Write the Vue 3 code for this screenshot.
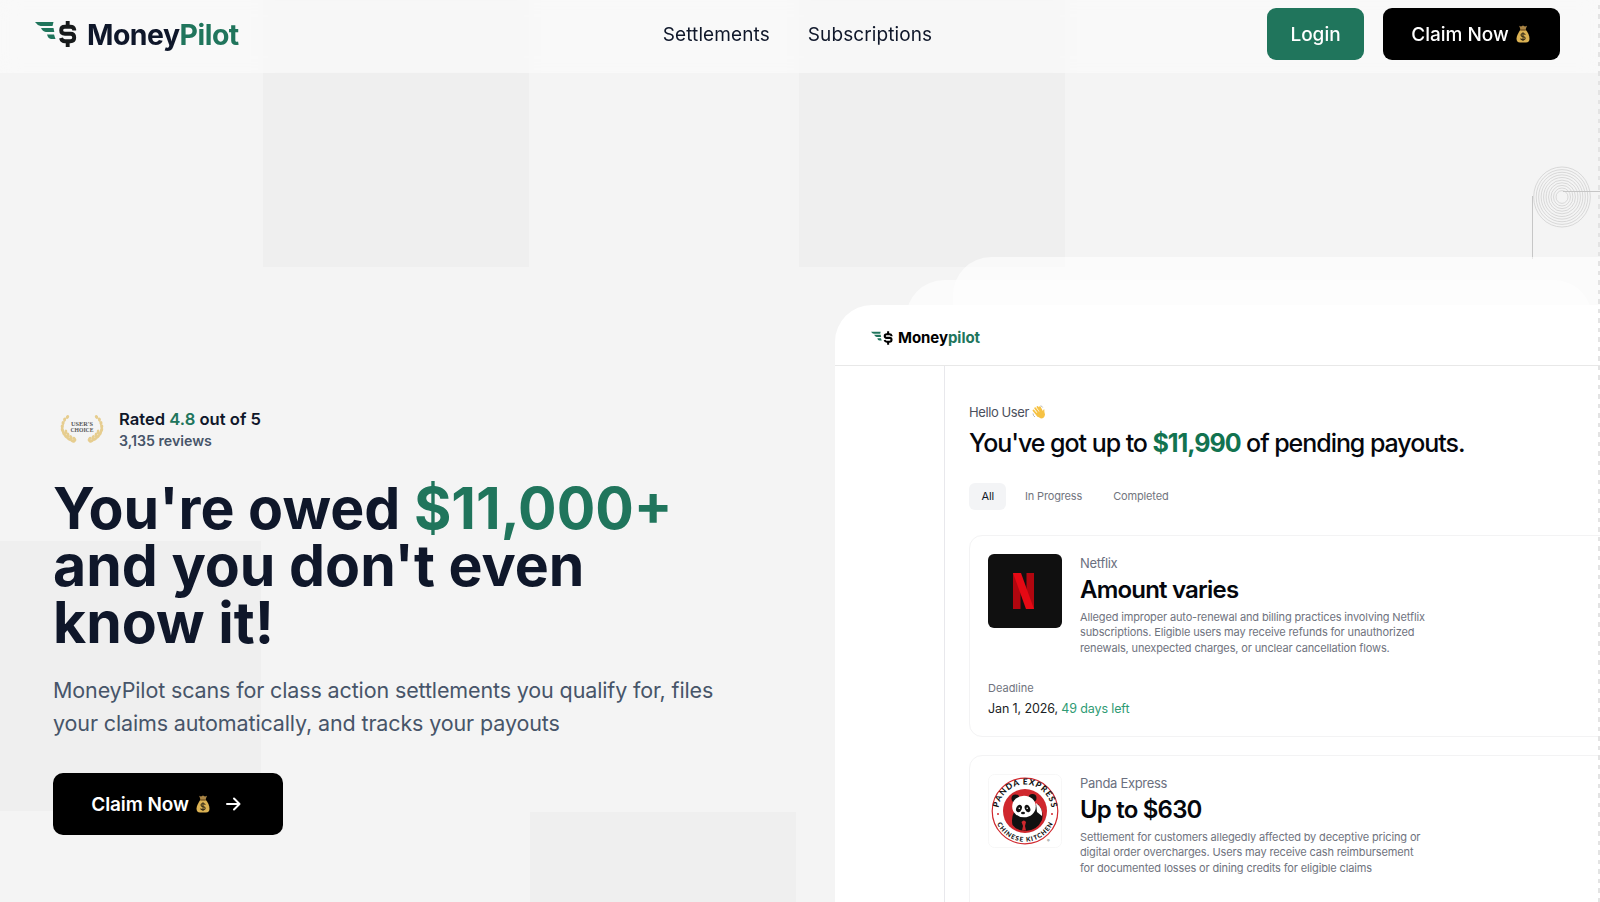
<script setup>
const links = ['Settlements', 'Subscriptions'];
const tabs = ['All', 'In Progress', 'Completed'];

const claims = [
  {
    id: 'netflix',
    name: 'Netflix',
    amount: 'Amount varies',
    lines: [
      'Alleged improper auto-renewal and billing practices involving Netflix',
      'subscriptions. Eligible users may receive refunds for unauthorized',
      'renewals, unexpected charges, or unclear cancellation flows.'
    ],
    deadline: 'Jan 1, 2026,',
    left: '49 days left'
  },
  {
    id: 'panda',
    name: 'Panda Express',
    amount: 'Up to $630',
    lines: [
      'Settlement for customers allegedly affected by deceptive pricing or',
      'digital order overcharges. Users may receive cash reimbursement',
      'for documented losses or dining credits for eligible claims'
    ]
  }
];

const rings = Array.from({ length: 10 }, (_, i) => 6 + i * 2.48);

// leaves of the left laurel branch, mirrored for the right one
const leaves = [
  [7.5, 2, 30], [4.6, 4.5, 15], [3, 8, 0], [2.2, 11.5, -5], [2.4, 15, -20],
  [3.8, 18.5, -30], [6, 21.5, -45], [9, 24, -60], [12.8, 26, -75],
  [5.8, 17, 5], [8, 20, -10], [11, 22.5, -25], [14.5, 24, -35]
];
</script>

<template>
  <div class="page">
    <svg class="defs" width="0" height="0">
      <symbol id="mark" viewBox="0 0 42 26">
        <g fill="#20755c">
          <path d="M0 1h18.5l-1 4H5.5Q2.5 4.500 0 1z" />
          <path d="M6 7h12.500l.8 4h-8.500Q7.500 10.500 6 7z" />
          <path d="M12 13.500h7l1.500 4.500h-4.500Q13 17.500 12 13.500z" />
        </g>
        <path d="M39.200 9.500V8.500Q38.500 5.800 35.500 5.800H30Q26.200 5.800 26.200 9.200T30 12.800H35.500Q39.200 12.800 39.200 16.500T35.500 20.200H30Q26.800 20.200 26 17M32.700 0V5.500M32.700 20.500V26" fill="none" stroke="currentColor" stroke-width="3.900" />
      </symbol>
      <symbol id="bag" viewBox="0 0 14 18">
        <path d="M3.200.8 5 1.500 7 .5l2 1L11 .8 9.500 4.800h-5z" fill="#a98445" />
        <path d="M4.500 4.500h5C12 7.500 13.500 10.500 13.500 13.800Q13.500 17.500 10 17.500H4Q.5 17.500.5 13.800.5 10.500 4.500 4.500z" fill="#dbb253" />
        <path d="M4.200 5h5.600" stroke="#6e4c1e" stroke-width="1.200" />
        <path d="M9.300 9.700Q8.800 8.500 7 8.500 5 8.500 5 10T7 11.600Q9.200 11.800 9.200 13.300T7 14.900Q5 14.900 4.600 13.500M7 7.300V16" fill="none" stroke="#3a3019" stroke-width="1.100" />
      </symbol>
    </svg>

    <div class="square sq-a"></div>
    <div class="square sq-b"></div>
    <div class="square sq-c"></div>
    <div class="square sq-d"></div>

    <svg class="spiral" width="70" height="96" viewBox="0 0 70 96">
      <g fill="none" stroke="#cbcbcb" stroke-width=".7">
        <ellipse v-for="r in rings" :key="r" cx="32" cy="33" :rx="r" :ry="r * 1.060" />
      </g>
      <path d="M2.500 32V95M33 27.500h37" fill="none" stroke="#c6c6c6" />
    </svg>

    <header class="navbar">
      <div class="brand">
        <svg class="mark" width="42" height="26"><use href="#mark" /></svg>
        <span class="brand-name">Money<b>Pilot</b></span>
      </div>
      <nav class="nav-links">
        <a v-for="link in links" :key="link" href="#">{{ link }}</a>
      </nav>
      <div class="actions">
        <button class="login">Login</button>
        <button class="claim"><span>Claim Now</span><svg width="14" height="18"><use href="#bag" /></svg></button>
      </div>
    </header>

    <main class="hero">
      <section class="intro">
        <div class="rating">
          <svg class="laurel" width="44" height="30" viewBox="0 0 44 30">
            <g v-for="side in [1, -1]" :key="side" :transform="side === 1 ? '' : 'translate(44 0) scale(-1 1)'">
              <path d="M7 1Q-1 14 6 22 10 26 16 26" fill="none" stroke="#e3c67e" stroke-width=".8" />
              <ellipse
                v-for="(leaf, i) in leaves" :key="i"
                :cx="leaf[0]" :cy="leaf[1]" rx="1.500" :ry="i < 4 ? 1.900 : 2.500"
                :transform="`rotate(${leaf[2]} ${leaf[0]} ${leaf[1]})`" fill="#e6cd8f"
              />
            </g>
            <text x="22" y="11" textLength="22" lengthAdjust="spacingAndGlyphs">USER'S</text>
            <text x="22" y="16.800" textLength="23" lengthAdjust="spacingAndGlyphs">CHOICE</text>
          </svg>
          <div>
            <p class="rated">Rated <em>4.8</em> out of 5</p>
            <p class="reviews">3,135 reviews</p>
          </div>
        </div>
        <h1>You're owed <em>$11,000+</em><br>and you don't even<br>know it!</h1>
        <p class="lead">MoneyPilot scans for class action settlements you qualify for, files<br>your claims automatically, and tracks your payouts</p>
        <button class="cta">
          <span>Claim Now</span>
          <svg width="14" height="18"><use href="#bag" /></svg>
          <svg class="arrow" width="15" height="14" viewBox="0 0 15 14">
            <path d="M1 7h12.500M8 1.500 13.500 7 8 12.500" fill="none" stroke="#fff" stroke-width="2" stroke-linecap="round" stroke-linejoin="round" />
          </svg>
        </button>
      </section>

      <section class="preview">
        <div class="layer layer-back"></div>
        <div class="layer layer-mid"></div>
        <div class="panel">
          <div class="panel-head">
            <svg class="mark" width="22" height="14"><use href="#mark" /></svg>
            <span class="panel-brand">Money<b>pilot</b></span>
          </div>
          <div class="panel-body">
            <aside></aside>
            <div class="content">
              <p class="hello">Hello User
                <svg width="14" height="14" viewBox="0 0 14 14">
                  <path d="M1.500 5.500 6 11M3.200 3.300 7.500 9M5.500 2 9.500 8M7.800 2.300 10.500 7.500" stroke="#f6c244" stroke-width="1.900" stroke-linecap="round" />
                  <path d="M4 8 10 5.500 11 7Q10.800 4 12.300 4.200 12.200 8 13 9.500 12.500 13.500 9 13.500 6.500 13 4 9.500z" fill="#f6c244" />
                  <path d="M1 8.500Q1 10.800 3 12M8.500.8Q10 1 10.700 2.500" fill="none" stroke="#a6a6a6" stroke-width=".8" />
                </svg>
              </p>
              <h2>You've got up to <em>$11,990</em> of pending payouts.</h2>
              <div class="tabs">
                <span v-for="(tab, i) in tabs" :key="tab" class="tab" :class="{ active: i === 0 }">{{ tab }}</span>
              </div>

              <article v-for="claim in claims" :key="claim.id" class="card">
                <div class="card-top">
                  <svg v-if="claim.id === 'netflix'" class="logo" width="74" height="74" viewBox="0 0 74 74">
                    <rect width="74" height="74" rx="6" fill="#101010" />
                    <rect x="25" y="19" width="7.500" height="36" fill="#b1060f" />
                    <rect x="38.500" y="19" width="7.500" height="36" fill="#b1060f" />
                    <rect x="25" y="19" width="8" height="36" fill="#e50914" transform="translate(-6.860 0) skewX(19.850)" />
                  </svg>
                  <svg v-else class="logo" width="74" height="74" viewBox="0 0 74 74">
                    <defs>
                      <path id="arc-top" d="M10.500 37a26.500 26.500 0 0 1 53 0" />
                      <path id="arc-bottom" d="M6.300 37a30.700 30.700 0 0 0 61.400 0" />
                    </defs>
                    <rect x=".5" y=".5" width="73" height="73" rx="6" fill="#fff" stroke="#f7f7f7" />
                    <circle cx="37" cy="37" r="32.800" fill="#fff" stroke="#d0282e" stroke-width="1.200" />
                    <circle cx="37" cy="37" r="22" fill="#d0282e" />
                    <g fill="#111">
                      <circle cx="27.500" cy="24.500" r="4" />
                      <circle cx="44.500" cy="24" r="4" />
                      <path d="M26 38Q23 44 24.500 51q5 6 12.500 6 12 0 17-11 2-9-4-16L46 32z" />
                    </g>
                    <path d="M48 29q7 5 6 13l-5-4z" fill="#fff" />
                    <ellipse cx="36" cy="32.500" rx="11.800" ry="10.800" fill="#fff" />
                    <ellipse cx="31" cy="34.500" rx="2.700" ry="3.800" transform="rotate(25 31 34.500)" fill="#111" />
                    <ellipse cx="39.500" cy="34.500" rx="2.600" ry="3.800" transform="rotate(-25 39.500 34.500)" fill="#111" />
                    <ellipse cx="35" cy="39" rx="2" ry="1.200" fill="#111" />
                    <circle cx="31.300" cy="34.300" r=".8" fill="#fff" />
                    <circle cx="39.200" cy="34.300" r=".8" fill="#fff" />
                    <path d="M33.500 48q2.500-3 4.500 0l-1 4 1 4.500h-4l1-4.500z" fill="#d0282e" />
                    <circle cx="10" cy="40" r="1" fill="#d0282e" />
                    <circle cx="64" cy="40" r="1" fill="#d0282e" />
                    <text class="seal seal-top" text-anchor="middle"><textPath href="#arc-top" startOffset="50%" textLength="76">PANDA EXPRESS</textPath></text>
                    <text class="seal seal-bottom" text-anchor="middle"><textPath href="#arc-bottom" startOffset="50%" textLength="70">CHINESE KITCHEN</textPath></text>
                    <text class="reg" x="59" y="68">®</text>
                  </svg>
                  <div>
                    <p class="name">{{ claim.name }}</p>
                    <h3>{{ claim.amount }}</h3>
                    <p class="desc"><template v-for="line in claim.lines" :key="line">{{ line }}<br></template></p>
                  </div>
                </div>
                <div v-if="claim.deadline" class="deadline">
                  <p class="label">Deadline</p>
                  <p class="date">{{ claim.deadline }} <em>{{ claim.left }}</em></p>
                </div>
              </article>
            </div>
          </div>
        </div>
      </section>
    </main>
    <div class="edge"></div>
  </div>
</template>

<style>
body {
  margin: 0;
  overflow: hidden;
}
</style>

<style scoped>
.page {
  position: relative;
  width: 1600px;
  height: 902px;
  overflow: hidden;
  background: #f4f4f4;
  color: #0f172a;
  font-family: Inter, "Liberation Sans", sans-serif;
}

p, h1, h2, h3 {
  margin: 0;
}

em {
  font-style: normal;
  color: #20755c;
}

b {
  font-weight: inherit;
  color: #20755c;
}

.defs {
  position: absolute;
}

.square {
  position: absolute;
  width: 266px;
  height: 267px;
  background: #efefef;
}

.sq-a { left: 263px; top: 0; }
.sq-b { left: 799px; top: 0; }
.sq-c { left: -5px; top: 541px; height: 270px; }
.sq-d { left: 530px; top: 812px; }

.spiral {
  position: absolute;
  left: 1530px;
  top: 164px;
}

.navbar {
  position: absolute;
  top: 0;
  left: 0;
  z-index: 10;
  display: grid;
  grid-template-columns: 1fr auto 1fr;
  align-items: center;
  width: 1600px;
  height: 73px;
  padding: 0 40px 5px 35px;
  box-sizing: border-box;
  background: rgba(252, 252, 252, 0.6);
  backdrop-filter: blur(10px);
}

.brand {
  display: flex;
  align-items: center;
  gap: 10px;
}

.mark {
  color: #171a1b;
}

.brand-name {
  font-size: 28.4px;
  font-weight: 700;
  letter-spacing: -0.5px;
}

.nav-links {
  display: flex;
  gap: 38px;
}

.nav-links a {
  color: #0f172a;
  text-decoration: none;
  font-size: 19px;
  letter-spacing: 0.1px;
}

.actions {
  display: flex;
  justify-content: flex-end;
  gap: 19px;
}

button {
  display: flex;
  align-items: center;
  justify-content: center;
  height: 52px;
  padding: 0;
  border: none;
  border-radius: 9px;
  background: #000;
  color: #fff;
  font-family: inherit;
  font-size: 19px;
  font-weight: 500;
}

.login {
  width: 97px;
  background: #20755c;
}

.claim {
  width: 177px;
  gap: 7px;
  box-sizing: border-box;
  padding-right: 2px;
}

.hero {
  position: relative;
  display: flex;
  height: 902px;
}

.intro {
  width: 783px;
  flex: none;
  box-sizing: border-box;
  padding: 409px 0 0 53px;
}

.rating {
  display: flex;
  align-items: center;
  gap: 15px;
  padding-left: 7px;
}

.laurel {
  margin-bottom: 1px;
}

.laurel text {
  font: 700 5.5px "Liberation Serif", serif;
  fill: #555;
  text-anchor: middle;
}

.rated {
  font-size: 16.6px;
  line-height: 21px;
  font-weight: 600;
}

.reviews {
  font-size: 14.2px;
  line-height: 21px;
  font-weight: 600;
  color: #475569;
}

h1 {
  margin-top: 30px;
  font-size: 57.2px;
  line-height: 56.8px;
  font-weight: 700;
}

.lead {
  margin-top: 23px;
  font-size: 21.5px;
  line-height: 33px;
  letter-spacing: -0.13px;
  color: #475569;
}

.cta {
  margin-top: 32.4px;
  width: 230px;
  height: 62px;
  box-sizing: border-box;
  padding: 1px 4px 0 0;
  border-radius: 10px;
  font-weight: 600;
  letter-spacing: -0.1px;
  gap: 7px;
}

.arrow {
  margin-left: 9px;
}

.preview {
  position: relative;
  width: 817px;
  flex: none;
  padding: 305px 0 0 52px;
  box-sizing: border-box;
}

.layer {
  position: absolute;
  height: 300px;
  background: rgba(255, 255, 255, 0.6);
  border-radius: 38px 38px 0 0;
}

.layer-back {
  left: 170px;
  top: 257px;
  width: 720px;
}

.layer-mid {
  left: 123px;
  top: 280px;
  width: 686px;
}

.panel {
  position: relative;
  width: 800px;
  height: 620px;
  background: #fff;
  border-top-left-radius: 37px;
  overflow: hidden;
}

.panel-head {
  display: flex;
  align-items: center;
  gap: 5px;
  height: 61px;
  padding: 5px 0 0 36px;
  box-sizing: border-box;
  border-bottom: 1px solid #e8e8e8;
}

.panel-head .mark {
  color: #000;
}

.panel-brand {
  color: #000;
  font-size: 15px;
  font-weight: 700;
  letter-spacing: -0.05px;
}

.panel-body {
  display: flex;
  height: 560px;
}

aside {
  width: 109px;
  flex: none;
  border-right: 1px solid #e8e8ec;
}

.content {
  flex: 1;
  padding: 36px 0 0 24px;
}

.hello {
  display: flex;
  align-items: center;
  gap: 3px;
  font-size: 13px;
  line-height: 20px;
  letter-spacing: -0.4px;
  color: #4b4f5c;
}

h2 {
  margin-top: 4px;
  font-size: 25px;
  line-height: 34px;
  font-weight: 500;
  color: #05070d;
  white-space: nowrap;
  letter-spacing: -1.05px;
}

h2 em {
  font-weight: 700;
  color: #127350;
}

.tabs {
  display: flex;
  gap: 6px;
  margin: 23px 0 25px;
}

.tab {
  padding: 0 12.500px;
  line-height: 27px;
  font-size: 11px;
  letter-spacing: -0.15px;
  color: #72757e;
}

.tab.active {
  background: #f3f4f6;
  border-radius: 6px;
  color: #111827;
}

.card {
  height: 202px;
  margin-bottom: 18px;
  padding: 18px;
  box-sizing: border-box;
  border: 1px solid #f3f3f4;
  border-radius: 13px;
}

.card-top {
  display: flex;
  gap: 18px;
}

.logo {
  flex: none;
}

.seal {
  font-family: Lato, sans-serif;
  font-weight: 900;
  fill: #111;
}

.seal-top { font-size: 8.3px; }
.seal-bottom { font-size: 6.4px; }

.reg {
  font-size: 4px;
  fill: #555;
}

.name {
  font-size: 13px;
  line-height: 18px;
  letter-spacing: -0.3px;
  color: #6b7080;
}

h3 {
  margin-top: 3px;
  font-size: 24px;
  line-height: 30px;
  font-weight: 600;
  color: #05070d;
  letter-spacing: -0.8px;
}

.desc {
  margin-top: 5px;
  font-size: 11px;
  line-height: 15.3px;
  letter-spacing: -0.14px;
  color: #6f737e;
}

.deadline {
  margin-top: 24px;
}

.label {
  font-size: 11px;
  line-height: 16px;
  color: #6f737e;
}

.date {
  margin-top: 4px;
  font-size: 12.5px;
  line-height: 18px;
  letter-spacing: -0.12px;
  color: #1b1e25;
}

.date em {
  color: #2f9b74;
}

.edge {
  position: absolute;
  top: 5px;
  right: 0;
  z-index: 20;
  width: 2px;
  height: 897px;
  background: repeating-linear-gradient(#e3e3e3 0 4.500px, transparent 4.500px 9.500px);
}
</style>
